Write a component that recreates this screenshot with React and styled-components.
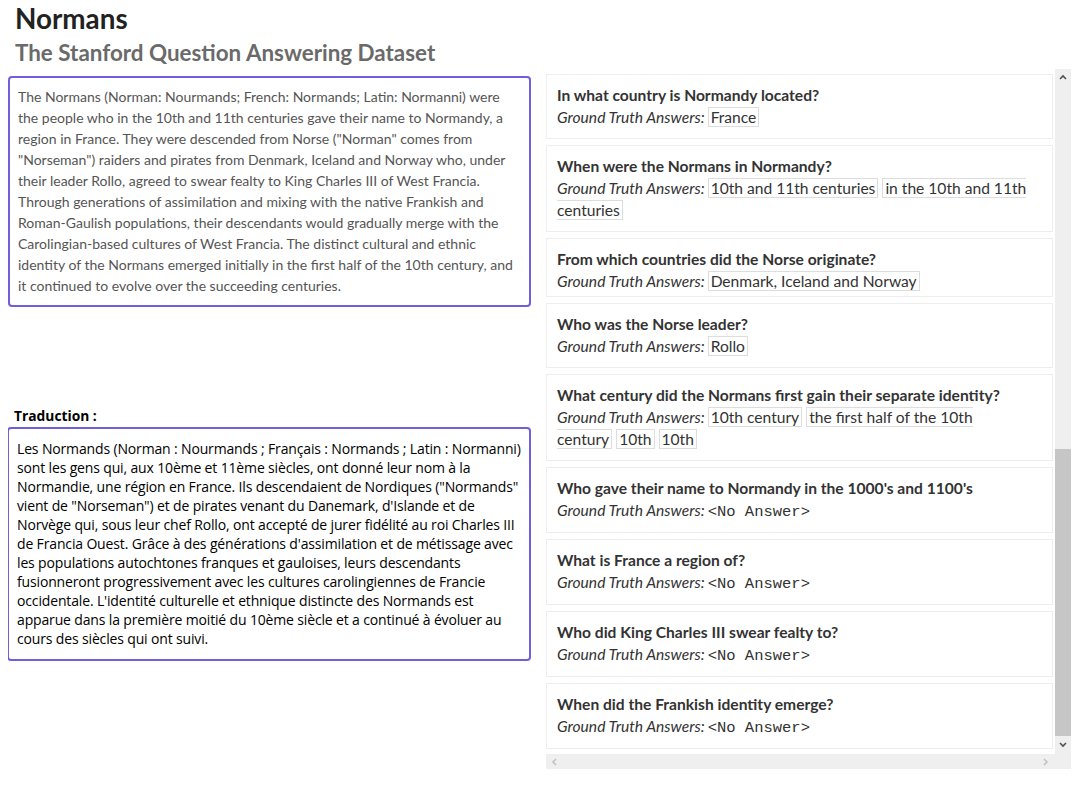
import React from "react";
import styled, { createGlobalStyle } from "styled-components";

const GlobalStyle = createGlobalStyle`
    body {
        margin: 8px;
        background: #fff;
        font-family: Lato, "Open Sans", sans-serif;
    }
`

const Header = styled.header`
    padding: 0 7px;
`

const Title = styled.h1`
    margin: 0;
    font-size: 27.8px;
    line-height: 22px;
    font-weight: 700;
    color: #222;
`

const Subtitle = styled.h2`
    margin: 11px 0 0;
    font-size: 22.4px;
    line-height: 24px;
    font-weight: 700;
    color: #6a6a6a;
`

const Columns = styled.div`
    display: grid;
    grid-template-columns: 523px 525px;
    column-gap: 15px;
    margin-top: 4px;
    align-items: start;
`

const LeftColumn = styled.div`
    padding-top: 7px;
`

const Box = styled.div`
    border: 2px solid #6f5fd8;
    border-radius: 4px;
    padding: 8px 8px 9px;
`

const Passage = styled(Box)`
    font-family: Lato, sans-serif;
    font-size: 14px;
    line-height: 21px;
    color: #555;
`

const Label = styled.div`
    margin: 100px 0 3px;
    padding-left: 6px;
    font-family: "Open Sans", sans-serif;
    font-size: 13.8px;
    line-height: 17px;
    font-weight: 700;
    color: #000;
`

const Translation = styled(Box)`
    margin-left: -1px;
    padding: 10px 8px 11px;
    font-family: "Open Sans", sans-serif;
    font-size: 14px;
    letter-spacing: -0.15px;
    line-height: 19px;
    color: #000;
`

const ScrollFrame = styled.div`
    display: grid;
    grid-template-columns: 509px 16px;
    grid-template-rows: 685px 15px;
`

const List = styled.div`
    overflow: hidden;
    padding-top: 5px;
`

const Card = styled.div`
    width: 485px;
    border: 1px solid #eee;
    padding: 9px 10px ${p => (p.$tight ? 4 : 10)}px;
    margin-bottom: 6px;
    font-family: Lato, sans-serif;
    font-size: 15.6px;
    line-height: 22px;
    color: #333;
`

const Question = styled.div`
    font-weight: 700;
`

const Answers = styled.div``

const Lead = styled.i`
    margin-right: 3px;
`

const Tag = styled.span`
    border: 1px solid #ddd;
    padding: 0 2px;
    margin-right: 4px;
`

const NoAnswer = styled.span`
    font-family: "Liberation Mono", "Courier New", monospace;
    font-size: 15.5px;
    line-height: 20px;
`

const VBar = styled.div`
    grid-row: 1 / span 2;
    grid-column: 2;
    display: flex;
    flex-direction: column;
    background: #efefef;
`

const Arrow = styled.div`
    height: ${p => p.$h}px;
    display: flex;
    align-items: center;
    justify-content: center;
`

const Track = styled.div`
    flex: 1;
`

const Thumb = styled.div`
    height: 287px;
    background: #c6c6c6;
`

const Corner = styled.div`
    height: 15px;
`

const HBar = styled.div`
    display: flex;
    justify-content: space-between;
    align-items: center;
    padding: 0 5px;
    background: #efefef;
`

const Chevron = ({ dir, color }) => {
    const pts = {
        up: "1,5 4,2 7,5",
        down: "1,2 4,5 7,2",
        left: "5,1 2,4 5,7",
        right: "2,1 5,4 2,7",
    }[dir];
    return (
        <svg width="8" height="8" viewBox="0 0 8 8">
            <polyline points={pts} fill="none" stroke={color} strokeWidth="1.6" />
        </svg>
    );
};

const questions = [
    { q: "In what country is Normandy located?", a: ["France"] },
    { q: "When were the Normans in Normandy?", a: ["10th and 11th centuries", "in the 10th and 11th centuries"] },
    { q: "From which countries did the Norse originate?", a: ["Denmark, Iceland and Norway"], tight: true },
    { q: "Who was the Norse leader?", a: ["Rollo"] },
    { q: "What century did the Normans first gain their separate identity?", a: ["10th century", "the first half of the 10th century", "10th", "10th"] },
    { q: "Who gave their name to Normandy in the 1000's and 1100's", a: [] },
    { q: "What is France a region of?", a: [] },
    { q: "Who did King Charles III swear fealty to?", a: [] },
    { q: "When did the Frankish identity emerge?", a: [] },
];

const passage =
    'The Normans (Norman: Nourmands; French: Normands; Latin: Normanni) were the people who in the 10th and 11th centuries gave their name to Normandy, a region in France. They were descended from Norse ("Norman" comes from "Norseman") raiders and pirates from Denmark, Iceland and Norway who, under their leader Rollo, agreed to swear fealty to King Charles III of West Francia. Through generations of assimilation and mixing with the native Frankish and Roman-Gaulish populations, their descendants would gradually merge with the Carolingian-based cultures of West Francia. The distinct cultural and ethnic identity of the Normans emerged initially in the first half of the 10th century, and it continued to evolve over the succeeding centuries.';

const translation =
    "Les Normands (Norman : Nourmands ; Français : Normands ; Latin : Normanni) sont les gens qui, aux 10ème et 11ème siècles, ont donné leur nom à la Normandie, une région en France. Ils descendaient de Nordiques (\"Normands\" vient de \"Norseman\") et de pirates venant du Danemark, d'Islande et de Norvège qui, sous leur chef Rollo, ont accepté de jurer fidélité au roi Charles III de Francia Ouest. Grâce à des générations d'assimilation et de métissage avec les populations autochtones franques et gauloises, leurs descendants fusionneront progressivement avec les cultures carolingiennes de Francie occidentale. L'identité culturelle et ethnique distincte des Normands est apparue dans la première moitié du 10ème siècle et a continué à évoluer au cours des siècles qui ont suivi.";

export default function App() {
    return (
        <>
            <GlobalStyle />
            <Header>
                <Title>Normans</Title>
                <Subtitle>The Stanford Question Answering Dataset</Subtitle>
            </Header>
            <Columns>
                <LeftColumn>
                    <Passage>{passage}</Passage>
                    <Label>Traduction :</Label>
                    <Translation>{translation}</Translation>
                </LeftColumn>
                <ScrollFrame>
                    <List>
                        {questions.map((item, i) => (
                            <Card key={i} $tight={item.tight}>
                                <Question>{item.q}</Question>
                                <Answers>
                                    <Lead>Ground Truth Answers:</Lead>
                                    {item.a.length
                                        ? item.a.map((a, j) => <Tag key={j}>{a}</Tag>)
                                        : <NoAnswer>&lt;No Answer&gt;</NoAnswer>}
                                </Answers>
                            </Card>
                        ))}
                    </List>
                    <VBar>
                        <Arrow $h={18}><Chevron dir="up" color="#505050" /></Arrow>
                        <Track />
                        <Thumb />
                        <Arrow $h={18}><Chevron dir="down" color="#505050" /></Arrow>
                        <Corner />
                    </VBar>
                    <HBar>
                        <Chevron dir="left" color="#c2c2c2" />
                        <Chevron dir="right" color="#c2c2c2" />
                    </HBar>
                </ScrollFrame>
            </Columns>
        </>
    );
}
